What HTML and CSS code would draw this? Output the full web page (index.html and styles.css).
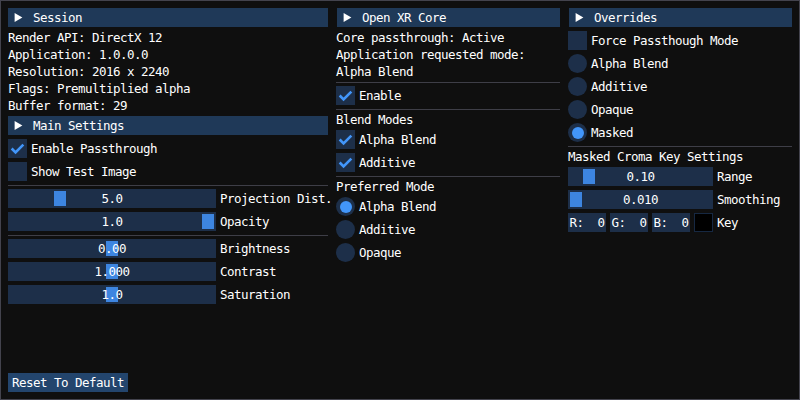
FILE: index.html
```html
<!DOCTYPE html>
<html>
<head>
<meta charset="utf-8">
<link rel="stylesheet" href="styles.css">
</head>
<body>
<div class="window">
  <div class="columns">
    <div class="col col1">
      <div class="header"><svg class="arrow" viewBox="0 0 13 13"><polygon points="10.4,6.5 2.6,11 2.6,2"/></svg><span>Session</span></div>
      <div class="text">Render API: DirectX 12</div>
      <div class="text">Application: 1.0.0.0</div>
      <div class="text">Resolution: 2016 x 2240</div>
      <div class="text">Flags: Premultiplied alpha</div>
      <div class="text">Buffer format: 29</div>
      <div class="header"><svg class="arrow" viewBox="0 0 13 13"><polygon points="10.4,6.5 2.6,11 2.6,2"/></svg><span>Main Settings</span></div>
      <div class="row"><div class="box"><svg class="check" viewBox="0 0 19 19"><polyline points="3.65,9.5 7.55,13.4 15.35,5.6"/></svg></div><span class="label">Enable Passthrough</span></div>
      <div class="row"><div class="box"></div><span class="label">Show Test Image</span></div>
      <div class="sep"></div>
      <div class="row"><div class="slider"><div class="grab" style="left:46px"></div><div class="value">5.0</div></div><span class="label">Projection Dist.</span></div>
      <div class="row"><div class="slider"><div class="grab" style="left:194px"></div><div class="value">1.0</div></div><span class="label">Opacity</span></div>
      <div class="sep"></div>
      <div class="row"><div class="slider"><div class="grab" style="left:98px"></div><div class="value">0.00</div></div><span class="label">Brightness</span></div>
      <div class="row"><div class="slider"><div class="grab" style="left:98px"></div><div class="value">1.000</div></div><span class="label">Contrast</span></div>
      <div class="row"><div class="slider"><div class="grab" style="left:98px"></div><div class="value">1.0</div></div><span class="label">Saturation</span></div>
    </div>
    <div class="col col2">
      <div class="header"><svg class="arrow" viewBox="0 0 13 13"><polygon points="10.4,6.5 2.6,11 2.6,2"/></svg><span>Open XR Core</span></div>
      <div class="text">Core passthrough: Active</div>
      <div class="text">Application requested mode:</div>
      <div class="text">Alpha Blend</div>
      <div class="sep"></div>
      <div class="row"><div class="box"><svg class="check" viewBox="0 0 19 19"><polyline points="3.65,9.5 7.55,13.4 15.35,5.6"/></svg></div><span class="label">Enable</span></div>
      <div class="sep"></div>
      <div class="text">Blend Modes</div>
      <div class="row"><div class="box"><svg class="check" viewBox="0 0 19 19"><polyline points="3.65,9.5 7.55,13.4 15.35,5.6"/></svg></div><span class="label">Alpha Blend</span></div>
      <div class="row"><div class="box"><svg class="check" viewBox="0 0 19 19"><polyline points="3.65,9.5 7.55,13.4 15.35,5.6"/></svg></div><span class="label">Additive</span></div>
      <div class="sep"></div>
      <div class="text">Preferred Mode</div>
      <div class="row"><div class="radio on"></div><span class="label">Alpha Blend</span></div>
      <div class="row"><div class="radio"></div><span class="label">Additive</span></div>
      <div class="row"><div class="radio"></div><span class="label">Opaque</span></div>
    </div>
    <div class="col col3">
      <div class="header"><svg class="arrow" viewBox="0 0 13 13"><polygon points="10.4,6.5 2.6,11 2.6,2"/></svg><span>Overrides</span></div>
      <div class="row"><div class="box"></div><span class="label">Force Passthough Mode</span></div>
      <div class="row"><div class="radio"></div><span class="label">Alpha Blend</span></div>
      <div class="row"><div class="radio"></div><span class="label">Additive</span></div>
      <div class="row"><div class="radio"></div><span class="label">Opaque</span></div>
      <div class="row"><div class="radio on"></div><span class="label">Masked</span></div>
      <div class="sep"></div>
      <div class="text">Masked Croma Key Settings</div>
      <div class="row"><div class="slider"><div class="grab" style="left:15px"></div><div class="value">0.10</div></div><span class="label">Range</span></div>
      <div class="row"><div class="slider"><div class="grab" style="left:2px"></div><div class="value">0.010</div></div><span class="label">Smoothing</span></div>
      <div class="row rgb">
        <div class="drag">R:  0</div>
        <div class="drag">G:  0</div>
        <div class="drag">B:  0</div>
        <div class="swatch"></div>
        <span class="label">Key</span>
      </div>
    </div>
  </div>
  <div class="button">Reset To Default</div>
</div>
</body>
</html>
```

FILE: styles.css
```css
html, body {
  margin: 0;
  padding: 0;
  background: #0f0f0f;
}

body {
  font-family: "DejaVu Sans Mono", "Liberation Mono", monospace;
  font-size: 12.5px;
  letter-spacing: -0.526px;
  line-height: 13px;
  color: #ffffff;
}

.window {
  box-sizing: border-box;
  width: 800px;
  height: 400px;
  border: 1px solid #43434d;
  padding: 7px;
  display: flex;
  flex-direction: column;
}

.columns {
  display: grid;
  grid-template-columns: 320px 224px 224px;
  column-gap: 8px;
  align-items: start;
}

.col {
  display: flex;
  flex-direction: column;
  gap: 4px;
  min-width: 0;
}

.header {
  box-sizing: border-box;
  height: 19px;
  padding: 3px 4px;
  background: #1f3958;
  display: flex;
  align-items: flex-start;
  white-space: nowrap;
}

.col2 .header,
.col3 .header {
  margin-left: 1px;
}

.arrow {
  width: 13px;
  height: 13px;
  fill: #ffffff;
  margin-right: 8px;
  flex: none;
}

.text {
  height: 13px;
  white-space: nowrap;
}

.sep {
  height: 1px;
  background: #3e3e47;
  margin-bottom: -1px;
}

.row {
  display: flex;
  align-items: flex-start;
  height: 19px;
}

.label {
  padding-top: 3px;
  white-space: nowrap;
}

.box {
  width: 19px;
  height: 19px;
  background: #1d2f49;
  flex: none;
  margin-right: 4px;
}

.check {
  display: block;
  width: 19px;
  height: 19px;
  fill: none;
  stroke: #4296fa;
  stroke-width: 2.6;
}

.radio {
  width: 19px;
  height: 19px;
  border-radius: 50%;
  background: #1d2f49;
  flex: none;
  margin-right: 4px;
  display: flex;
  align-items: center;
  justify-content: center;
}

.radio.on::after {
  content: "";
  width: 12px;
  height: 12px;
  border-radius: 50%;
  background: #4296fa;
}

.slider {
  position: relative;
  box-sizing: border-box;
  width: 208px;
  height: 19px;
  background: #1d2f49;
  flex: none;
  margin-right: 4px;
}

.col3 .slider {
  width: 145px;
}

.grab {
  position: absolute;
  top: 2px;
  width: 12px;
  height: 15px;
  background: #3d85e0;
}

.value {
  position: relative;
  padding-top: 3px;
  height: 13px;
  text-align: center;
  white-space: pre;
}

.rgb {
  gap: 4px;
}

.drag {
  box-sizing: border-box;
  width: 38px;
  height: 19px;
  padding-top: 3px;
  background: #1d2f49;
  text-align: center;
  white-space: pre;
  flex: none;
}

.swatch {
  box-sizing: border-box;
  width: 19px;
  height: 19px;
  background: #000000;
  border: 1px solid #162842;
  flex: none;
}

.button {
  align-self: flex-start;
  margin-top: auto;
  height: 13px;
  padding: 3px 4px;
  background: #23456d;
  white-space: nowrap;
}
```
